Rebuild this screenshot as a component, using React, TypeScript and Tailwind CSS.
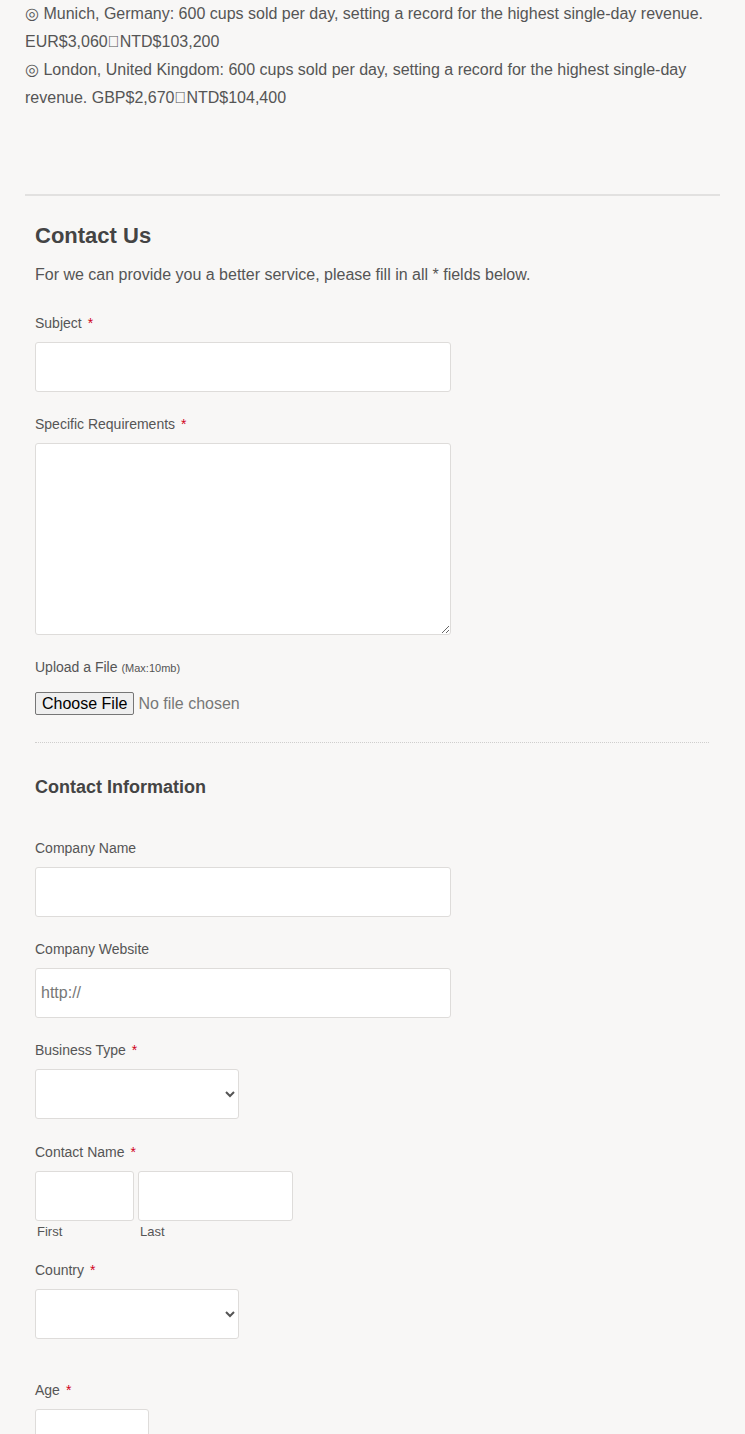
export default function App() {
  return (
    <div className="min-h-screen bg-[#f8f7f6] font-['Liberation_Sans',Arial,sans-serif] text-[#555]">
      <div className="px-[25px]">
        <div className="text-[16px] leading-[28px] text-[#555]">
          <p>◎ Munich, Germany: 600 cups sold per day, setting a record for the highest single-day revenue. EUR$3,060{'\uE000'}NTD$103,200</p>
          <p>◎ London, United Kingdom: 600 cups sold per day, setting a record for the highest single-day revenue. GBP$2,670{'\uE000'}NTD$104,400</p>
        </div>
        <hr className="mt-[82px] border-t-2 border-[#e2e1e0]" />
      </div>

      <form className="px-[35px] pt-[24px]">
        <h2 className="text-[22px] font-bold leading-[32px] text-[#444]">Contact Us</h2>
        <p className="mt-[11px] text-[16px] leading-[24px] text-[#555]">
          For we can provide you a better service, please fill in all * fields below.
        </p>

        <Field label="Subject" required className="mt-[26px]">
          <input className="h-[50px] w-[416px] rounded-[3px] border border-[#dedcda] bg-white" />
        </Field>

        <Field label="Specific Requirements" required className="mt-[22px]">
          <textarea className="block h-[192px] w-[416px] rounded-[3px] border border-[#dedcda] bg-white" />
        </Field>

        <div className="mt-[22px]">
          <div className="text-[14px] leading-[20px] text-[#555]">
            Upload a File <span className="text-[11px]">(Max:10mb)</span>
          </div>
          <input
            type="file"
            className="mt-[14px] block text-[16px] leading-[19px] text-[#777] file:mr-[4px] file:rounded-[2px] file:border file:border-solid file:border-[#767676] file:bg-[#efefef] file:px-[6px] file:py-[1px] file:text-[16px] file:leading-[19px] file:text-black"
          />
        </div>

        <div className="mt-[27px] mr-[1px] border-t border-dotted border-[#cfcecd]" />

        <h3 className="mt-[32px] text-[18px] font-bold leading-[24px] text-[#444]">Contact Information</h3>

        <Field label="Company Name" className="mt-[39px]">
          <input className="h-[50px] w-[416px] rounded-[3px] border border-[#dedcda] bg-white" />
        </Field>

        <Field label="Company Website" className="mt-[22px]">
          <input placeholder="http://" className="h-[50px] w-[416px] rounded-[3px] border border-[#dedcda] bg-white px-[5px] text-[16px] placeholder:text-[#777]" />
        </Field>

        <Field label="Business Type" required className="mt-[22px]">
          <select className="h-[50px] w-[204px] rounded-[3px] border border-[#dedcda] bg-white" />
        </Field>

        <Field label="Contact Name" required className="mt-[23px]">
          <div className="flex gap-[4px]">
            <div>
              <input className="h-[50px] w-[99px] rounded-[3px] border border-[#dedcda] bg-white" />
              <div className="mt-[2px] pl-[2px] text-[13px] leading-[18px]">First</div>
            </div>
            <div>
              <input className="h-[50px] w-[155px] rounded-[3px] border border-[#dedcda] bg-white" />
              <div className="mt-[2px] pl-[2px] text-[13px] leading-[18px]">Last</div>
            </div>
          </div>
        </Field>

        <Field label="Country" required className="mt-[19px]">
          <select className="h-[50px] w-[204px] rounded-[3px] border border-[#dedcda] bg-white" />
        </Field>

        <Field label="Age" required className="mt-[41px]">
          <input className="h-[50px] w-[114px] rounded-[3px] border border-[#dedcda] bg-white" />
        </Field>
      </form>
    </div>
  )
}

function Field({ label, required, className, children }: { label: string; required?: boolean; className?: string; children: React.ReactNode }) {
  return (
    <div className={className}>
      <label className="block text-[14px] leading-[20px] text-[#555]">
        {label}
        {required && <span className="ml-[6px] text-[#d0021b]">*</span>}
      </label>
      <div className="mt-[9px]">{children}</div>
    </div>
  )
}
